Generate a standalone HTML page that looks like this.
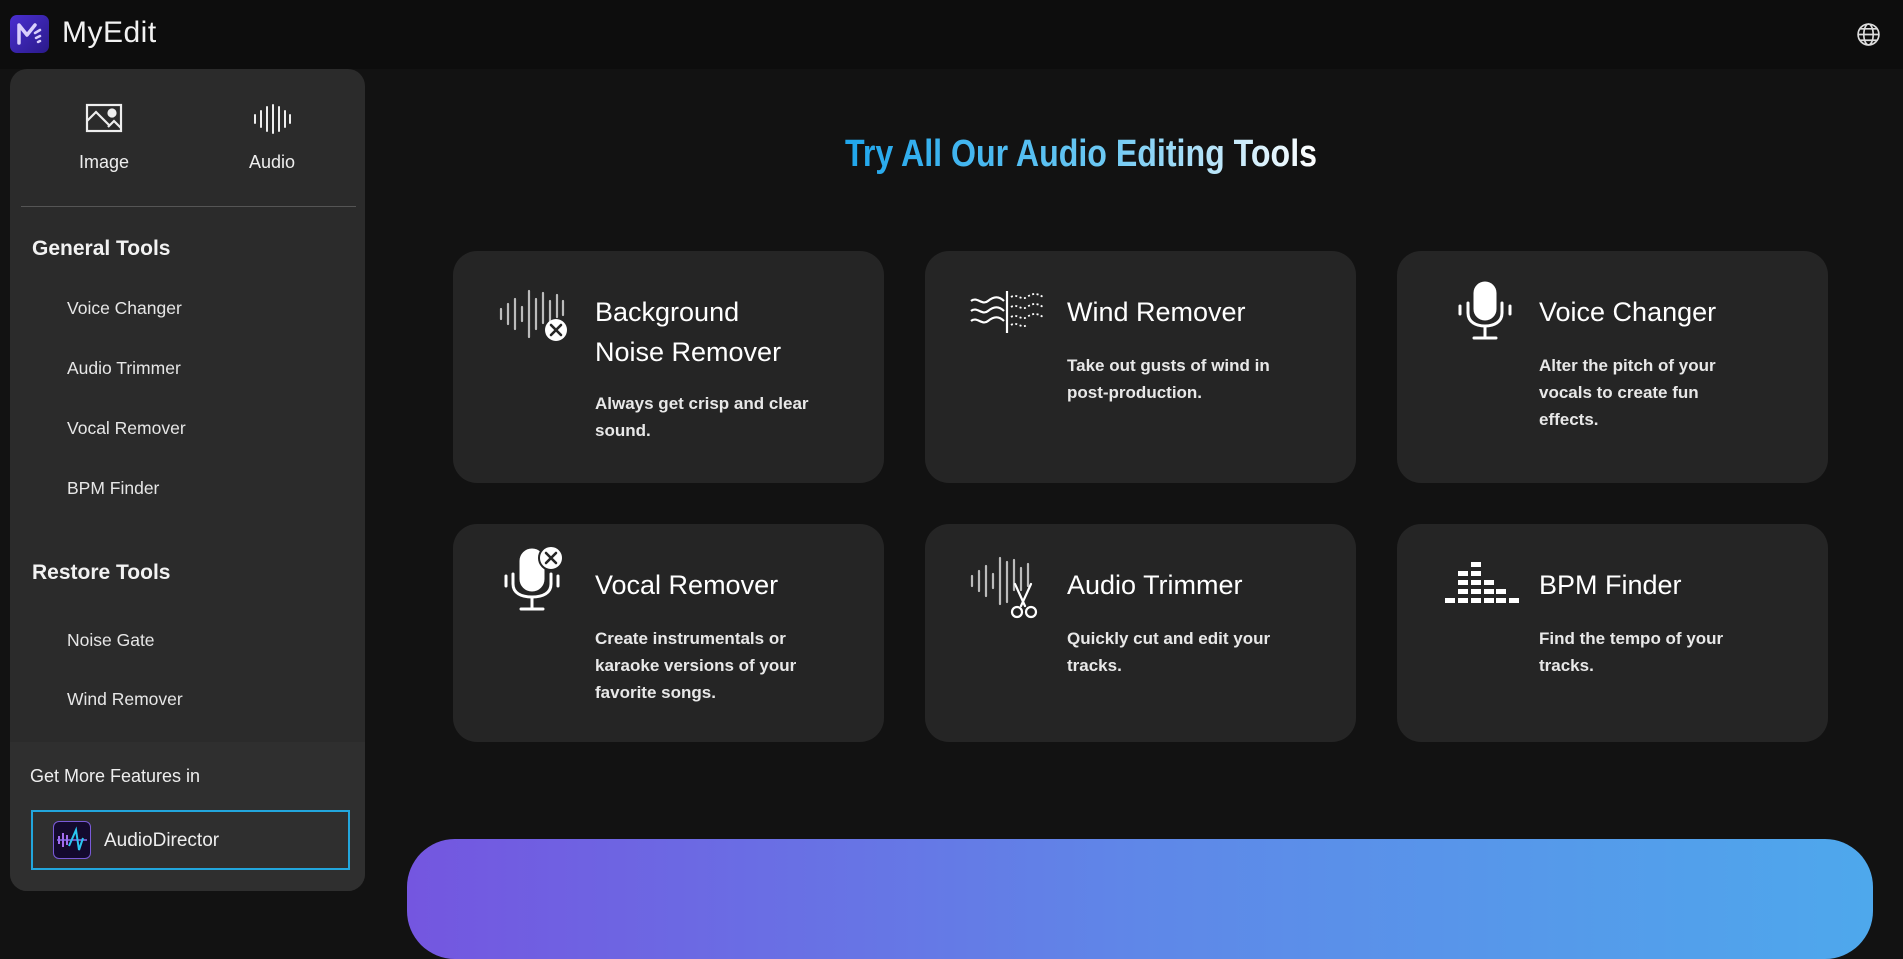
<!DOCTYPE html>
<html><head><meta charset="utf-8"><style>
*{margin:0;padding:0;box-sizing:border-box}
body{width:1903px;height:899px;overflow:hidden;background:#121212;font-family:"Liberation Sans",sans-serif;color:#fff;position:relative}
.hdr{position:absolute;left:0;top:0;width:1903px;height:69px;background:#0d0d0d}
.logo{position:absolute;left:10px;top:15px;width:39px;height:38px;border-radius:7px;background:linear-gradient(135deg,#4a2fd0,#2a1a8a)}
.brand{position:absolute;left:62px;top:16px;font-size:30px;color:#f2f2f2;letter-spacing:0.5px}
.side{position:absolute;left:10px;top:69px;width:355px;height:822px;background:#2b2b2b;border-radius:17px;overflow:hidden}
.tab{position:absolute;top:0;width:150px;text-align:center;font-size:18px;color:#eee}
.div{position:absolute;left:11px;top:137px;width:335px;height:1px;background:#555}
.sh{position:absolute;left:22px;font-size:21px;font-weight:bold;color:#f2f2f2}
.si{position:absolute;left:57px;font-size:17.5px;color:#e6e6e6}
.bot{position:absolute;left:0;top:673px;width:355px;height:149px;background:#2f2f2f}
.card{position:absolute;width:431px;background:#252525;border-radius:24px}
.card .t{position:absolute;left:142px;font-size:27px;color:#fff;line-height:40px}
.card .d{position:absolute;left:142px;font-size:17px;font-weight:bold;color:#e8e8e8;line-height:27px;width:226px}
.card svg{position:absolute}
</style></head><body>
<div class="hdr"></div>
<div class="logo"><svg width="39" height="38" viewBox="0 0 39 38"><path d="M9 28V10l8 10 8-10" stroke="#d9cffc" stroke-width="3.5" fill="none" stroke-linecap="round" stroke-linejoin="round"/><path d="M25 18l5-3M26 23l4-2M28 27l2-1" stroke="#d9cffc" stroke-width="2.5" stroke-linecap="round"/></svg></div>
<div class="brand">MyEdit</div>
<svg style="position:absolute;left:1856px;top:22px" width="25" height="25" viewBox="0 0 24 24" fill="none" stroke="#ddd" stroke-width="1.6"><circle cx="12" cy="12" r="10"/><ellipse cx="12" cy="12" rx="4.5" ry="10"/><path d="M2 12h20M4 6.5h16M4 17.5h16"/></svg>

<div class="side">
 <div class="tab" style="left:19px;top:34px"><svg width="38" height="32" viewBox="0 0 38 32" fill="none" stroke="#eee" stroke-width="2.2"><rect x="2" y="2" width="34" height="26"/><path d="M2 18l9-9 14 14"/><path d="M23 24l6-6 7 7"/><circle cx="27" cy="10" r="3.5" fill="#eee"/></svg><div style="margin-top:12px">Image</div></div>
 <div class="tab" style="left:187px;top:34px"><svg width="40" height="32" viewBox="0 0 40 32" stroke="#eee" stroke-width="2" stroke-linecap="round"><path d="M3 12v8M9 8v16M15 4v24M21 2v28M27 4v24M33 8v16M38 12v8"/></svg><div style="margin-top:12px">Audio</div></div>
 <div class="div"></div>
 <div class="sh" style="top:168px">General Tools</div>
 <div class="si" style="top:229px">Voice Changer</div>
 <div class="si" style="top:289px">Audio Trimmer</div>
 <div class="si" style="top:349px">Vocal Remover</div>
 <div class="si" style="top:409px">BPM Finder</div>
 <div class="sh" style="top:492px">Restore Tools</div>
 <div class="si" style="top:561px">Noise Gate</div>
 <div class="si" style="top:620px">Wind Remover</div>
 <div class="bot">
  <div style="position:absolute;left:20px;top:24px;font-size:18px;color:#eee">Get More Features in</div>
  <div style="position:absolute;left:21px;top:68px;width:319px;height:60px;border:2px solid #22a6dd">
   <div style="position:absolute;left:20px;top:9px;width:38px;height:38px;border-radius:6px;background:#140a2e;border:1.5px solid #7a5ad8"><svg width="35" height="35" viewBox="0 0 35 35" stroke-width="2" fill="none"><path d="M5 14v8M9 11v14M13 13v10" stroke="#a46cf0"/><path d="M3 18h30" stroke="#8a6ef0" stroke-width="1.5"/><path d="M15 24L22 8l3 20 4-12" stroke="#2ac6f0"/></svg></div>
   <div style="position:absolute;left:71px;top:18px;font-size:19px;color:#eee">AudioDirector</div>
  </div>
 </div>
</div>

<svg style="position:absolute;left:845px;top:128px" width="475" height="50"><defs><linearGradient id="g" x1="0" x2="1"><stop offset="0" stop-color="#1fa6ec"/><stop offset="0.55" stop-color="#6cc8f3"/><stop offset="1" stop-color="#ffffff"/></linearGradient></defs><text x="0" y="38" font-family="Liberation Sans" font-weight="bold" font-size="38" fill="url(#g)" textLength="472" lengthAdjust="spacingAndGlyphs">Try All Our Audio Editing Tools</text></svg>

<div class="card" style="left:453px;top:251px;height:232px">
 <svg style="left:45px;top:36px" width="72" height="56" viewBox="0 0 72 56" stroke="#bbb" stroke-width="2.2" stroke-linecap="round"><path d="M3 22v10M10 17v20M17 12v30M24 20v14M31 4v46M38 12v30M45 6v30M52 14v22M59 8v22M65 14v14"/><circle cx="58" cy="43" r="11" fill="#fff" stroke="none"/><path d="M53 38l10 10M63 38l-10 10" stroke="#252525" stroke-width="2.6"/></svg>
 <div class="t" style="top:41px">Background<br>Noise Remover</div>
 <div class="d" style="top:139px">Always get crisp and clear sound.</div>
</div>
<div class="card" style="left:925px;top:251px;height:232px">
 <svg style="left:44px;top:38px" width="78" height="46" viewBox="0 0 78 46" fill="none" stroke="#fff" stroke-width="2.2"><path d="M2 12c6-5 11 5 17 0s11-5 16 0M2 22c6-5 11 5 17 0s11-5 16 0M2 32c6-5 11 5 17 0s11-5 16 0"/><path d="M38 2v42" /><path d="M42 8c6-4 10 4 16 0s10-4 16 0M42 18c6-4 10 4 16 0s10-4 16 0M42 28c6-4 10 4 16 0s10-4 16 0M42 36c6-4 10 4 16 0" stroke-dasharray="2 2.5" stroke-width="1.8"/></svg>
 <div class="t" style="top:41px">Wind Remover</div>
 <div class="d" style="top:101px">Take out gusts of wind in post&#8209;production.</div>
</div>
<div class="card" style="left:1397px;top:251px;height:232px">
 <svg style="left:60px;top:30px" width="56" height="60" viewBox="0 0 56 60" fill="none" stroke="#fff" stroke-width="3" stroke-linecap="round"><rect x="18" y="2" width="20" height="36" rx="10" fill="#fff"/><path d="M11 22v10c0 9 8 13 17 13s17-4 17-13V22"/><path d="M3 25v8M53 25v8M28 45v12M17 57h22"/></svg>
 <div class="t" style="top:41px">Voice Changer</div>
 <div class="d" style="top:101px">Alter the pitch of your<br>vocals to create fun<br>effects.</div>
</div>
<div class="card" style="left:453px;top:524px;height:218px">
 <svg style="left:50px;top:20px" width="66" height="70" viewBox="0 0 66 70" fill="none" stroke="#fff" stroke-width="3" stroke-linecap="round"><rect x="18" y="6" width="22" height="40" rx="11" fill="#fff"/><path d="M10 30v10c0 9 8 13 19 13s19-4 19-13V30"/><path d="M3 32v10M55 32v10M29 53v12M18 65h22"/><circle cx="48" cy="14" r="12" fill="#fff" stroke="#252525" stroke-width="2"/><path d="M43 9l10 10M53 9l-10 10" stroke="#252525" stroke-width="2.6"/></svg>
 <div class="t" style="top:41px">Vocal Remover</div>
 <div class="d" style="top:101px">Create instrumentals or karaoke versions of your favorite songs.</div>
</div>
<div class="card" style="left:925px;top:524px;height:218px">
 <svg style="left:44px;top:30px" width="72" height="66" viewBox="0 0 72 66" fill="none" stroke="#bbb" stroke-width="2.2" stroke-linecap="round"><path d="M3 22v10M10 17v20M17 12v30M24 20v14M31 4v46M38 8v40M45 6v30M52 14v22M59 10v22"/><path d="M46 30l10 22M62 30l-10 22" stroke="#fff"/><circle cx="48" cy="58" r="5" stroke="#fff"/><circle cx="62" cy="58" r="5" stroke="#fff"/></svg>
 <div class="t" style="top:41px">Audio Trimmer</div>
 <div class="d" style="top:101px">Quickly cut and edit your tracks.</div>
</div>
<div class="card" style="left:1397px;top:524px;height:218px">
 <svg style="left:46px;top:38px" width="76" height="42" viewBox="0 0 76 42" fill="#fff"><rect x="28" y="0" width="10" height="5"/><rect x="15" y="9" width="10" height="5"/><rect x="28" y="9" width="10" height="5"/><rect x="15" y="18" width="10" height="5"/><rect x="28" y="18" width="10" height="5"/><rect x="41" y="18" width="10" height="5"/><rect x="15" y="27" width="10" height="5"/><rect x="28" y="27" width="10" height="5"/><rect x="41" y="27" width="10" height="5"/><rect x="53" y="27" width="10" height="5"/><rect x="2" y="36" width="10" height="5"/><rect x="15" y="36" width="10" height="5"/><rect x="28" y="36" width="10" height="5"/><rect x="41" y="36" width="10" height="5"/><rect x="53" y="36" width="10" height="5"/><rect x="66" y="36" width="10" height="5"/></svg>
 <div class="t" style="top:41px">BPM Finder</div>
 <div class="d" style="top:101px">Find the tempo of your tracks.</div>
</div>

<div style="position:absolute;left:407px;top:839px;width:1466px;height:120px;border-radius:48px;background:linear-gradient(90deg,#7456e0,#5f87e8 50%,#4ea8ec)"></div>
</body></html>
